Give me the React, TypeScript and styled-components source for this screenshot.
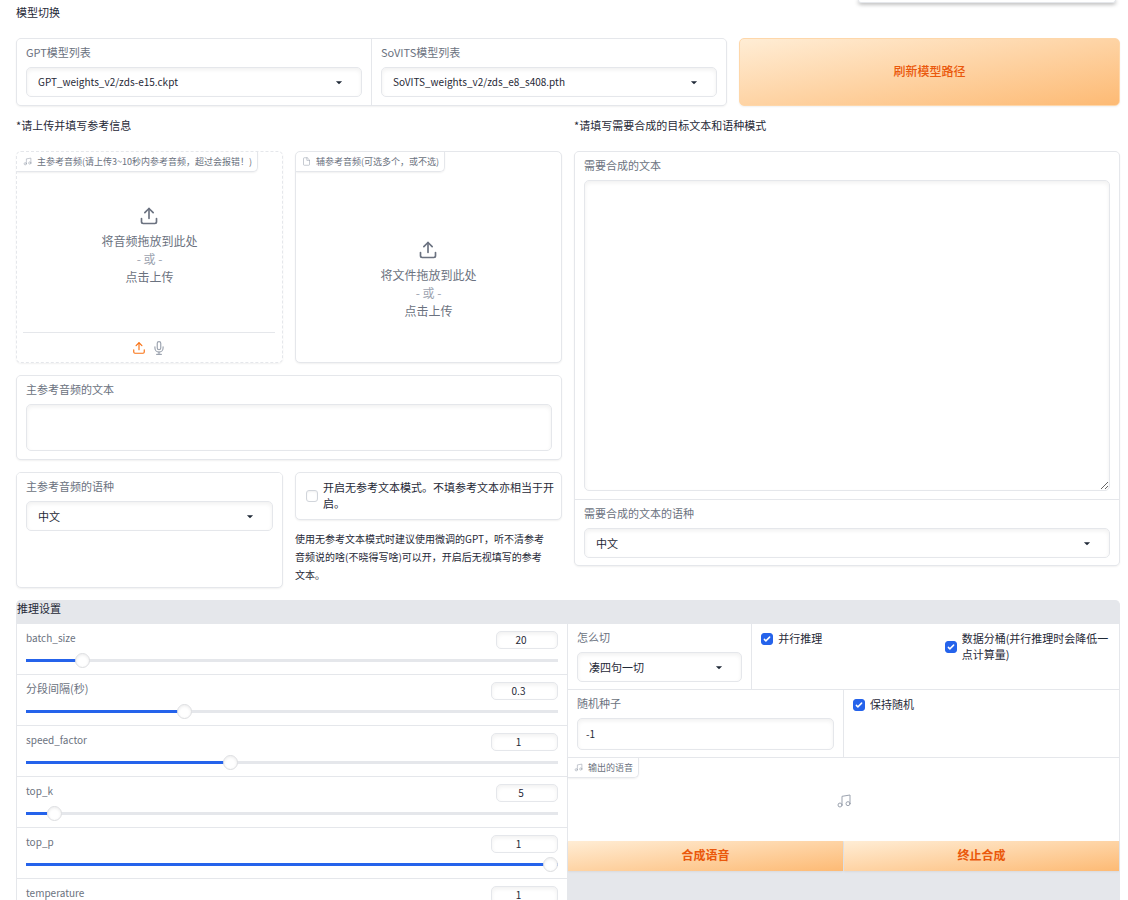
import React, { useId, useState } from 'react';
import styled, { createGlobalStyle, css } from 'styled-components';

const color = {
  line: '#e5e7eb',
  label: '#6b7280',
  text: '#1f2937',
  faint: '#9ca3af',
  accent: '#2563eb',
  orange: '#f97316',
  orangeText: '#ea580c',
};

const GlobalStyle = createGlobalStyle`
  *, *::before, *::after { box-sizing: border-box; }
  body {
    margin: 0;
    background: #fff;
    color: ${color.text};
    font: 11px/16px "Noto Sans CJK SC", "Noto Sans", sans-serif;
  }
  button, input, select, textarea { font: inherit; color: inherit; margin: 0; }
  h2, p { margin: 0; font: inherit; }
`;

/* ---------- layout ---------- */

const Page = styled.main`
  display: flex;
  flex-direction: column;
  padding: 3px 8px 0 16px;
`;

const StatusPopup = styled.div`
  position: absolute;
  top: 0;
  right: 12px;
  width: 258px;
  height: 3px;
  background: #fff;
  border: 1px solid ${color.line};
  border-top: 0;
  border-radius: 0 0 4px 4px;
  box-shadow: 0 1px 4px rgba(0, 0, 0, 0.4);
`;

const Heading = styled.h2`
  line-height: 18px;
`;

const ModelRow = styled.div`
  display: grid;
  grid-template-columns: 28fr 15fr;
  gap: 12px;
  margin: 17px 0 10px;
`;

const Halves = styled.div`
  display: grid;
  grid-template-columns: minmax(0, 1fr) minmax(0, 1fr);
  gap: 12px;
`;

const Column = styled.section`
  display: flex;
  flex-direction: column;
`;

const Stack = styled.div`
  display: flex;
  flex-direction: column;
  gap: 12px;
  margin-top: 17px;
`;

const Card = styled.div<{ $dashed?: boolean }>`
  display: flex;
  flex-direction: column;
  overflow: hidden;
  border: 1px ${(p) => (p.$dashed ? 'dashed' : 'solid')} ${color.line};
  border-radius: 5px;
  background: #fff;
  box-shadow: 0 1px 2px rgba(0, 0, 0, 0.06);
`;

const UploadCard = styled(Card)`
  min-height: 212px;
`;

const Split = styled.div<{ $columns: string }>`
  display: grid;
  grid-template-columns: ${(p) => p.$columns};
  gap: 1px;
  background: ${color.line};
`;

const FormCard = styled(Card)`
  gap: 1px;
  background: ${color.line};
`;

const FieldBox = styled.div<{ $tight?: boolean }>`
  display: flex;
  flex-direction: column;
  gap: 7px;
  min-width: 0;
  padding: 5px 9px ${(p) => (p.$tight ? 7 : 8)}px;
  background: #fff;
`;

const Label = styled.label`
  color: ${color.label};
`;

/* ---------- controls ---------- */

const control = css`
  width: 100%;
  border: 1px solid ${color.line};
  border-radius: 5px;
  background: #fff;
  box-shadow: inset 0 2px 4px rgba(0, 0, 0, 0.06);
  outline: none;
`;

const SelectWrap = styled.div`
  position: relative;
  display: flex;
`;

const SelectBox = styled.select<{ $latin?: boolean }>`
  ${control}
  height: 30px;
  padding: 0 34px 0 11px;
  appearance: none;
  font-size: ${(p) => (p.$latin ? 10 : 11)}px;
`;

const Arrow = styled.svg`
  position: absolute;
  top: 8px;
  right: 16px;
  width: 14px;
  height: 14px;
  fill: ${color.text};
  pointer-events: none;
`;

const TextArea = styled.textarea<{ $height: number; $resize?: boolean }>`
  ${control}
  display: block;
  height: ${(p) => p.$height}px;
  padding: 7px 8px;
  resize: ${(p) => (p.$resize ? 'vertical' : 'none')};
`;

const TextInput = styled.input`
  ${control}
  height: 32px;
  padding: 0 8px 2px;
  font-size: 10px;
`;

const PrimaryButton = styled.button<{ $flat?: boolean }>`
  min-height: 30px;
  padding: 0 12px 2px;
  border: ${(p) => (p.$flat ? '0' : '1px solid #fed7aa')};
  border-radius: ${(p) => (p.$flat ? 0 : 5)}px;
  background: linear-gradient(to bottom right, #ffedd5, #fdba74);
  box-shadow: 0 1px 2px rgba(0, 0, 0, 0.06);
  color: ${color.orangeText};
  font-size: 12px;
  font-weight: ${(p) => (p.$flat ? 700 : 500)};
  cursor: pointer;
`;

const CheckLabel = styled.label`
  display: flex;
  align-items: center;
  gap: 5px;
`;

const CheckText = styled.span`
  padding-bottom: 2px;
`;

const CheckCell = styled.div`
  padding: 6px 9px;
  background: #fff;
`;

const CheckPair = styled.div`
  display: grid;
  grid-template-columns: 1fr 1fr;
  background: #fff;
`;

const CheckInput = styled.input`
  flex: none;
  width: 12px;
  height: 12px;
  appearance: none;
  border: 1px solid #d1d5db;
  border-radius: 3px;
  background: #fff;
  box-shadow: inset 0 1px 2px rgba(0, 0, 0, 0.06);

  &:checked {
    border-color: ${color.accent};
    background-color: ${color.accent};
    box-shadow: none;
  }
`;

const CheckMark = styled.svg`
  position: absolute;
  inset: 0;
  width: 12px;
  height: 12px;
  fill: #fff;
  pointer-events: none;
`;

const CheckHolder = styled.span`
  position: relative;
  display: flex;
  flex: none;
`;

/* ---------- upload cards ---------- */

const Tab = styled.div`
  display: flex;
  align-items: center;
  align-self: flex-start;
  gap: 5px;
  height: 20px;
  padding: 0 5px 0 6px;
  border-right: 1px solid ${color.line};
  border-bottom: 1px solid ${color.line};
  border-radius: 0 0 5px 0;
  box-shadow: 0 1px 2px rgba(0, 0, 0, 0.06);
  color: ${color.label};
  font-size: 9px;
  white-space: nowrap;

  svg { color: ${color.faint}; }
`;

const DropButton = styled.button<{ $top: number }>`
  display: flex;
  flex: 1;
  flex-direction: column;
  align-items: center;
  padding: ${(p) => p.$top}px 0 0;
  border: 0;
  background: none;
  color: ${color.label};
  font-size: 12px;
  line-height: 18px;
  cursor: pointer;

  svg { margin: 0 2px 6px 0; }
`;

const Or = styled.span`
  color: ${color.faint};
`;

const SourceBar = styled.div`
  display: flex;
  align-items: center;
  justify-content: center;
  gap: 6px;
  height: 30px;
  margin: 0 7px 0 6px;
  border-top: 1px solid ${color.line};
`;

const IconButton = styled.button<{ $active?: boolean }>`
  display: flex;
  padding: 0;
  border: 0;
  background: none;
  color: ${(p) => (p.$active ? color.orange : color.faint)};
  cursor: pointer;
`;

const NoteColumn = styled.div`
  display: flex;
  flex-direction: column;
  gap: 10px;
  padding-bottom: 4px;
`;

const ToggleCard = styled(Card)`
  padding: 6px 6px 6px 10px;
`;

const Note = styled.p`
  padding-right: 12px;
  font-size: 10px;
  line-height: 18px;
`;

/* ---------- inference settings ---------- */

const Settings = styled.section`
  margin-top: 12px;
  border: 1px solid ${color.line};
  border-top: 0;
  border-radius: 5px 5px 0 0;
  background: ${color.line};
`;

const SettingsHeading = styled.h2`
  height: 24px;
  line-height: 16px;
`;

const SettingsGrid = styled.div`
  display: grid;
  grid-template-columns: minmax(0, 550fr) minmax(0, 551fr);
  gap: 1px;
`;

const Rows = styled.div`
  display: flex;
  flex-direction: column;
  gap: 1px;
`;

const SliderRow = styled.div`
  display: flex;
  flex-direction: column;
  gap: 4px;
  padding: 7px 9px 6px;
  background: #fff;
`;

const SliderHead = styled.div`
  display: flex;
  justify-content: space-between;
  height: 18px;
`;

const SliderLabel = styled(Label)<{ $latin: boolean }>`
  font-size: ${(p) => (p.$latin ? 10 : 11)}px;
  line-height: ${(p) => (p.$latin ? 14 : 12)}px;
`;

const NumberInput = styled.input<{ $wide: boolean }>`
  ${control}
  width: ${(p) => (p.$wide ? 67 : 62)}px;
  padding: 0 12px 0 0;
  text-align: center;
  font-size: 10px;
  appearance: textfield;

  &::-webkit-inner-spin-button { appearance: none; margin: 0; }
`;

const Range = styled.input`
  width: 100%;
  height: 15px;
  margin: 0;
  appearance: none;
  background:
    linear-gradient(${color.accent}, ${color.accent}) left center / var(--fill) 3px no-repeat,
    linear-gradient(${color.line}, ${color.line}) center / 100% 3px no-repeat;

  &::-webkit-slider-thumb {
    width: 15px;
    height: 15px;
    appearance: none;
    border: 1px solid #dcdde0;
    border-radius: 50%;
    background: #fff;
    box-shadow: inset 0 1px 3px rgba(0, 0, 0, 0.08);
  }
`;

const Output = styled.div`
  display: flex;
  flex-direction: column;
  height: 83px;
  background: #fff;
`;

const OutputEmpty = styled.div`
  display: flex;
  justify-content: center;
  padding-top: 15px;
  color: ${color.faint};
`;

const Rest = styled.div`
  display: flex;
  flex-direction: column;
`;

/* ---------- icons ---------- */

type IconProps = { size: number; width?: number; children: React.ReactNode };

const Icon = ({ size, width = 2, children }: IconProps) => (
  <svg
    width={size}
    height={size}
    viewBox="0 0 24 24"
    fill="none"
    stroke="currentColor"
    strokeWidth={width}
    strokeLinecap="round"
    strokeLinejoin="round"
    aria-hidden="true"
  >
    {children}
  </svg>
);

const UploadIcon = ({ size }: { size: number }) => (
  <Icon size={size}>
    <path d="M21 15v4a2 2 0 0 1-2 2H5a2 2 0 0 1-2-2v-4" />
    <polyline points="17 8 12 3 7 8" />
    <line x1="12" y1="3" x2="12" y2="15" />
  </Icon>
);

const MicIcon = ({ size }: { size: number }) => (
  <Icon size={size}>
    <path d="M12 1a3 3 0 0 0-3 3v8a3 3 0 0 0 6 0V4a3 3 0 0 0-3-3z" />
    <path d="M19 10v2a7 7 0 0 1-14 0v-2" />
    <line x1="12" y1="19" x2="12" y2="23" />
    <line x1="8" y1="23" x2="16" y2="23" />
  </Icon>
);

const MusicIcon = ({ size }: { size: number }) => (
  <Icon size={size} width={1.5}>
    <path d="M9 18V5l12-2v13" />
    <circle cx="6" cy="18" r="3" />
    <circle cx="18" cy="16" r="3" />
  </Icon>
);

const FileIcon = ({ size }: { size: number }) => (
  <Icon size={size} width={1.5}>
    <path d="M13 2H6a2 2 0 0 0-2 2v16a2 2 0 0 0 2 2h12a2 2 0 0 0 2-2V9z" />
    <polyline points="13 2 13 9 20 9" />
  </Icon>
);

/* ---------- composed parts ---------- */

type SelectFieldProps = { label: string; value: string; latin?: boolean; tight?: boolean };

const SelectField = ({ label, value, latin, tight }: SelectFieldProps) => {
  const id = useId();
  return (
    <FieldBox $tight={tight}>
      <Label htmlFor={id}>{label}</Label>
      <SelectWrap>
        <SelectBox id={id} $latin={latin} defaultValue={value}>
          <option>{value}</option>
        </SelectBox>
        <Arrow viewBox="0 0 18 18" aria-hidden="true">
          <path d="M5 8l4 4 4-4z" />
        </Arrow>
      </SelectWrap>
    </FieldBox>
  );
};

type AreaFieldProps = { label: string; height: number; resize?: boolean };

const AreaField = ({ label, height, resize }: AreaFieldProps) => {
  const id = useId();
  return (
    <FieldBox>
      <Label htmlFor={id}>{label}</Label>
      <TextArea id={id} $height={height} $resize={resize} />
    </FieldBox>
  );
};

const Check = ({ checked = false, children }: { checked?: boolean; children: React.ReactNode }) => {
  const [on, setOn] = useState(checked);
  return (
    <CheckLabel>
      <CheckHolder>
        <CheckInput type="checkbox" checked={on} onChange={(e) => setOn(e.target.checked)} />
        {on && (
          <CheckMark viewBox="0 0 16 16" aria-hidden="true">
            <path d="M12.207 4.793a1 1 0 010 1.414l-5 5a1 1 0 01-1.414 0l-2-2a1 1 0 011.414-1.414L6.5 9.086l4.293-4.293a1 1 0 011.414 0z" />
          </CheckMark>
        )}
      </CheckHolder>
      <CheckText>{children}</CheckText>
    </CheckLabel>
  );
};

type SliderProps = {
  label: string;
  value: number;
  min: number;
  max: number;
  step: number;
};

const Slider = ({ label, value, min, max, step }: SliderProps) => {
  const id = useId();
  const [current, setCurrent] = useState(value);
  const fill = `${((current - min) / (max - min)) * 100}%`;
  const update = (e: React.ChangeEvent<HTMLInputElement>) => setCurrent(Number(e.target.value));
  return (
    <SliderRow>
      <SliderHead>
        <SliderLabel htmlFor={id} $latin={/^\w+$/.test(label)}>
          {label}
        </SliderLabel>
        <NumberInput
          id={id}
          type="number"
          $wide={step < 1}
          min={min}
          max={max}
          step={step}
          value={current}
          onChange={update}
        />
      </SliderHead>
      <Range
        type="range"
        aria-label={label}
        min={min}
        max={max}
        step="any"
        value={current}
        onChange={update}
        style={{ '--fill': fill } as React.CSSProperties}
      />
    </SliderRow>
  );
};

const sliders: SliderProps[] = [
  { label: 'batch_size', value: 20, min: 1, max: 200, step: 1 },
  { label: '分段间隔(秒)', value: 0.3, min: 0.01, max: 1, step: 0.01 },
  { label: 'speed_factor', value: 1, min: 0.6, max: 1.65, step: 0.05 },
  { label: 'top_k', value: 5, min: 1, max: 100, step: 1 },
  { label: 'top_p', value: 1, min: 0, max: 1, step: 0.05 },
  { label: 'temperature', value: 1, min: 0, max: 1, step: 0.05 },
];

const Drop = ({ top, children }: { top: number; children: React.ReactNode }) => (
  <DropButton type="button" $top={top}>
    <UploadIcon size={20} />
    <span>{children}</span>
    <Or>- 或 -</Or>
    <span>点击上传</span>
  </DropButton>
);

export default function App() {
  const seedId = useId();
  return (
    <Page>
      <GlobalStyle />
      <StatusPopup />

      <Heading>模型切换</Heading>
      <ModelRow>
        <FormCard>
          <Split $columns="1fr 1fr">
            <SelectField label="GPT模型列表" value="GPT_weights_v2/zds-e15.ckpt" latin />
            <SelectField label="SoVITS模型列表" value="SoVITS_weights_v2/zds_e8_s408.pth" latin />
          </Split>
        </FormCard>
        <PrimaryButton type="button">刷新模型路径</PrimaryButton>
      </ModelRow>

      <Halves>
        <Column>
          <Heading>*请上传并填写参考信息</Heading>
          <Stack>
            <Halves>
              <UploadCard $dashed>
                <Tab>
                  <MusicIcon size={9} />
                  主参考音频(请上传3~10秒内参考音频，超过会报错！)
                </Tab>
                <Drop top={34}>将音频拖放到此处</Drop>
                <SourceBar>
                  <IconButton type="button" $active aria-label="上传">
                    <UploadIcon size={14} />
                  </IconButton>
                  <IconButton type="button" aria-label="录音">
                    <MicIcon size={14} />
                  </IconButton>
                </SourceBar>
              </UploadCard>
              <UploadCard>
                <Tab>
                  <FileIcon size={9} />
                  辅参考音频(可选多个，或不选)
                </Tab>
                <Drop top={68}>将文件拖放到此处</Drop>
              </UploadCard>
            </Halves>

            <FormCard>
              <AreaField label="主参考音频的文本" height={47} />
            </FormCard>

            <Halves>
              <Card>
                <SelectField label="主参考音频的语种" value="中文" />
              </Card>
              <NoteColumn>
                <ToggleCard>
                  <Check>开启无参考文本模式。不填参考文本亦相当于开启。</Check>
                </ToggleCard>
                <Note>
                  使用无参考文本模式时建议使用微调的GPT，听不清参考音频说的啥(不晓得写啥)可以开，开启后无视填写的参考文本。
                </Note>
              </NoteColumn>
            </Halves>
          </Stack>
        </Column>

        <Column>
          <Heading>*请填写需要合成的目标文本和语种模式</Heading>
          <Stack>
            <FormCard>
              <AreaField label="需要合成的文本" height={311} resize />
              <SelectField label="需要合成的文本的语种" value="中文" tight />
            </FormCard>
          </Stack>
        </Column>
      </Halves>

      <Settings>
        <SettingsHeading>推理设置</SettingsHeading>
        <SettingsGrid>
          <Rows>
            {sliders.map((s) => (
              <Slider key={s.label} {...s} />
            ))}
          </Rows>
          <Rest>
            <Rows>
              <Split $columns="1fr 2fr">
                <SelectField label="怎么切" value="凑四句一切" tight />
                <CheckPair>
                  <CheckCell>
                    <Check checked>并行推理</Check>
                  </CheckCell>
                  <CheckCell>
                    <Check checked>数据分桶(并行推理时会降低一点计算量)</Check>
                  </CheckCell>
                </CheckPair>
              </Split>
              <Split $columns="1fr 1fr">
                <FieldBox $tight>
                  <Label htmlFor={seedId}>随机种子</Label>
                  <TextInput id={seedId} type="text" defaultValue="-1" />
                </FieldBox>
                <CheckCell>
                  <Check checked>保持随机</Check>
                </CheckCell>
              </Split>
              <Output>
                <Tab>
                  <MusicIcon size={9} />
                  输出的语音
                </Tab>
                <OutputEmpty>
                  <MusicIcon size={16} />
                </OutputEmpty>
              </Output>
            </Rows>
            <Split $columns="1fr 1fr">
              <PrimaryButton type="button" $flat>
                合成语音
              </PrimaryButton>
              <PrimaryButton type="button" $flat>
                终止合成
              </PrimaryButton>
            </Split>
          </Rest>
        </SettingsGrid>
      </Settings>
    </Page>
  );
}
